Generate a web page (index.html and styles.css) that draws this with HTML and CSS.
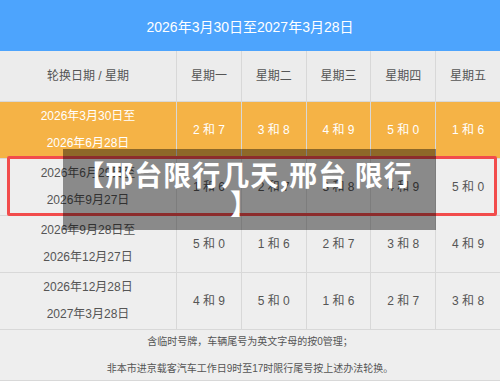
FILE: index.html
```html
<!DOCTYPE html>
<html lang="zh-CN">
<head>
<meta charset="utf-8">
<title>邢台限行几天</title>
<link rel="stylesheet" href="styles.css">
</head>
<body>
<div class="frame">
  <div class="sheet">
    <div class="title">2026年3月30日至2027年3月28日</div>
    <div class="cell head first">轮换日期 / 星期</div>
    <div class="cell head">星期一</div>
    <div class="cell head">星期二</div>
    <div class="cell head">星期三</div>
    <div class="cell head">星期四</div>
    <div class="cell head">星期五</div>

    <div class="cell hot"><span>2026年3月30日至</span><span>2026年6月28日</span></div>
    <div class="cell hot">2 和 7</div>
    <div class="cell hot">3 和 8</div>
    <div class="cell hot">4 和 9</div>
    <div class="cell hot">5 和 0</div>
    <div class="cell hot">1 和 6</div>

    <div class="cell"><span>2026年6月29日至</span><span>2026年9月27日</span></div>
    <div class="cell">1 和 6</div>
    <div class="cell">2 和 7</div>
    <div class="cell">3 和 8</div>
    <div class="cell">4 和 9</div>
    <div class="cell">5 和 0</div>

    <div class="cell"><span>2026年9月28日至</span><span>2026年12月27日</span></div>
    <div class="cell">5 和 0</div>
    <div class="cell">1 和 6</div>
    <div class="cell">2 和 7</div>
    <div class="cell">3 和 8</div>
    <div class="cell">4 和 9</div>

    <div class="cell"><span>2026年12月28日</span><span>2027年3月28日</span></div>
    <div class="cell">4 和 9</div>
    <div class="cell">5 和 0</div>
    <div class="cell">1 和 6</div>
    <div class="cell">2 和 7</div>
    <div class="cell">3 和 8</div>

    <div class="note"><span>含临时号牌，车辆尾号为英文字母的按0管理；</span><span>非本市进京载客汽车工作日9时至17时限行尾号按上述办法轮换。</span></div>
  </div>
  <div class="highlight"></div>
  <div class="banner"><p class="banner-text">【邢台限行几天,邢台 限行】</p></div>
</div>
</body>
</html>
```
FILE: styles.css
```css
html, body {
  margin: 0;
  padding: 0;
  background: #eeeeee;
}

.frame {
  position: relative;
  width: 500px;
  height: 381px;
  overflow: hidden;
  font-family: "Liberation Sans", "Noto Sans CJK SC", sans-serif;
}

.sheet {
  display: grid;
  grid-template-columns: 176px repeat(5, 1fr);
  grid-template-rows: 50px 50px repeat(4, 56px) 50px;
  column-gap: 1px;
  row-gap: 1px;
  background: #d8d8d8;
  border-bottom: 1px solid #d8d8d8;
}

.title {
  grid-column: 1 / -1;
  background: #4da4fd;
  color: #ffffff;
  font-size: 14px;
  display: flex;
  align-items: center;
  justify-content: center;
  margin-bottom: -1px;
}

.cell {
  background: #eeeeee;
  color: #555555;
  font-size: 12px;
  line-height: 27px;
  display: flex;
  flex-direction: column;
  align-items: center;
  justify-content: center;
  text-align: center;
}

.head {
  background: #ececec;
  font-size: 12px;
}

.hot {
  background: #f5b346;
  color: #ffffff;
}

.note {
  grid-column: 1 / -1;
  background: #eeeeee;
  color: #555555;
  font-size: 10px;
  line-height: 27px;
  display: flex;
  flex-direction: column;
  align-items: center;
  justify-content: center;
}

.highlight {
  position: absolute;
  left: 7px;
  top: 156px;
  width: 484px;
  height: 54px;
  border: 3px solid #f24c4c;
  border-radius: 2px;
}

.banner {
  position: absolute;
  left: 63px;
  top: 149px;
  width: 373px;
  height: 81px;
  box-sizing: border-box;
  padding: 11px 21px 0 11px;
  background: rgba(0, 0, 0, 0.42);
}

.banner-text {
  margin: 0;
  color: #ffffff;
  font-family: "Noto Sans CJK SC", sans-serif;
  font-weight: 700;
  font-size: 28px;
  letter-spacing: 1px;
  line-height: 29px;
  text-align: center;
  line-break: anywhere;
}
```
